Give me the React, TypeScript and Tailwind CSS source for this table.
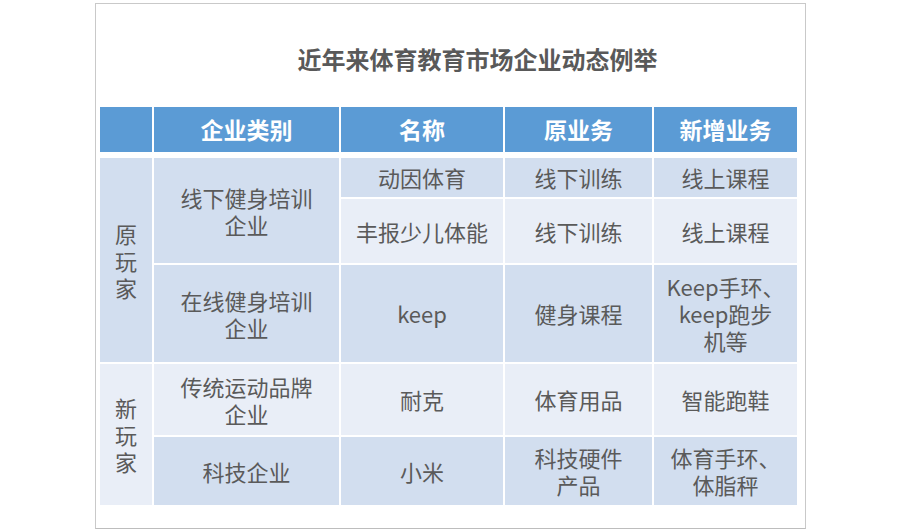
import React from 'react';

const font = { fontFamily: '"Noto Sans CJK SC", "Noto Sans", sans-serif' };

const dark = 'bg-[#d2deef]';
const light = 'bg-[#e9eef7]';

function Cell({
  className,
  lines,
}: {
  className: string;
  lines: string[];
}) {
  return (
    <div
      className={`flex flex-col items-center justify-center text-center text-[22px] leading-[27px] text-[#5a5a5a] ${className}`}
    >
      {lines.map((l, i) => (
        <span key={i} className="block h-[27px]">
          {l}
        </span>
      ))}
    </div>
  );
}

export default function App() {
  const headers = ['', '企业类别', '名称', '原业务', '新增业务'];

  return (
    <div className="w-[900px] h-[530px] bg-white pt-[3px] pl-[95px]" style={font}>
      <div className="w-[711px] h-[526px] border border-[#c9c9c9] border-b-[#bdbdbd] flex flex-col pl-[4px]">
        <div className="h-[103px] flex items-center justify-center pl-[50px] pt-[6px]">
          <h1 className="text-[24px] font-bold text-[#595959]">
            近年来体育教育市场企业动态例举
          </h1>
        </div>

        <div className="grid grid-cols-[52px_185px_162px_147px_143px] gap-x-[2px] h-[45px]">
          {headers.map((h, i) => (
            <div
              key={i}
              className="bg-[#5b9bd5] flex items-center justify-center text-white text-[23px] font-bold"
            >
              {h}
            </div>
          ))}
        </div>

        <div className="mt-[6px] grid grid-cols-[52px_185px_162px_147px_143px] grid-rows-[39px_64px_97px_71px_68px] gap-[2px]">
          <Cell className={`${dark} row-span-3`} lines={['原', '玩', '家']} />
          <Cell className={`${dark} row-span-2`} lines={['线下健身培训', '企业']} />
          <Cell className={dark} lines={['动因体育']} />
          <Cell className={dark} lines={['线下训练']} />
          <Cell className={dark} lines={['线上课程']} />

          <Cell className={light} lines={['丰报少儿体能']} />
          <Cell className={light} lines={['线下训练']} />
          <Cell className={light} lines={['线上课程']} />

          <Cell className={dark} lines={['在线健身培训', '企业']} />
          <Cell className={dark} lines={['keep']} />
          <Cell className={dark} lines={['健身课程']} />
          <Cell className={dark} lines={['Keep手环、', 'keep跑步', '机等']} />

          <Cell className={`${light} row-span-2`} lines={['新', '玩', '家']} />
          <Cell className={light} lines={['传统运动品牌', '企业']} />
          <Cell className={light} lines={['耐克']} />
          <Cell className={light} lines={['体育用品']} />
          <Cell className={light} lines={['智能跑鞋']} />

          <Cell className={dark} lines={['科技企业']} />
          <Cell className={dark} lines={['小米']} />
          <Cell className={dark} lines={['科技硬件', '产品']} />
          <Cell className={dark} lines={['体育手环、', '体脂秤']} />
        </div>
      </div>
    </div>
  );
}
